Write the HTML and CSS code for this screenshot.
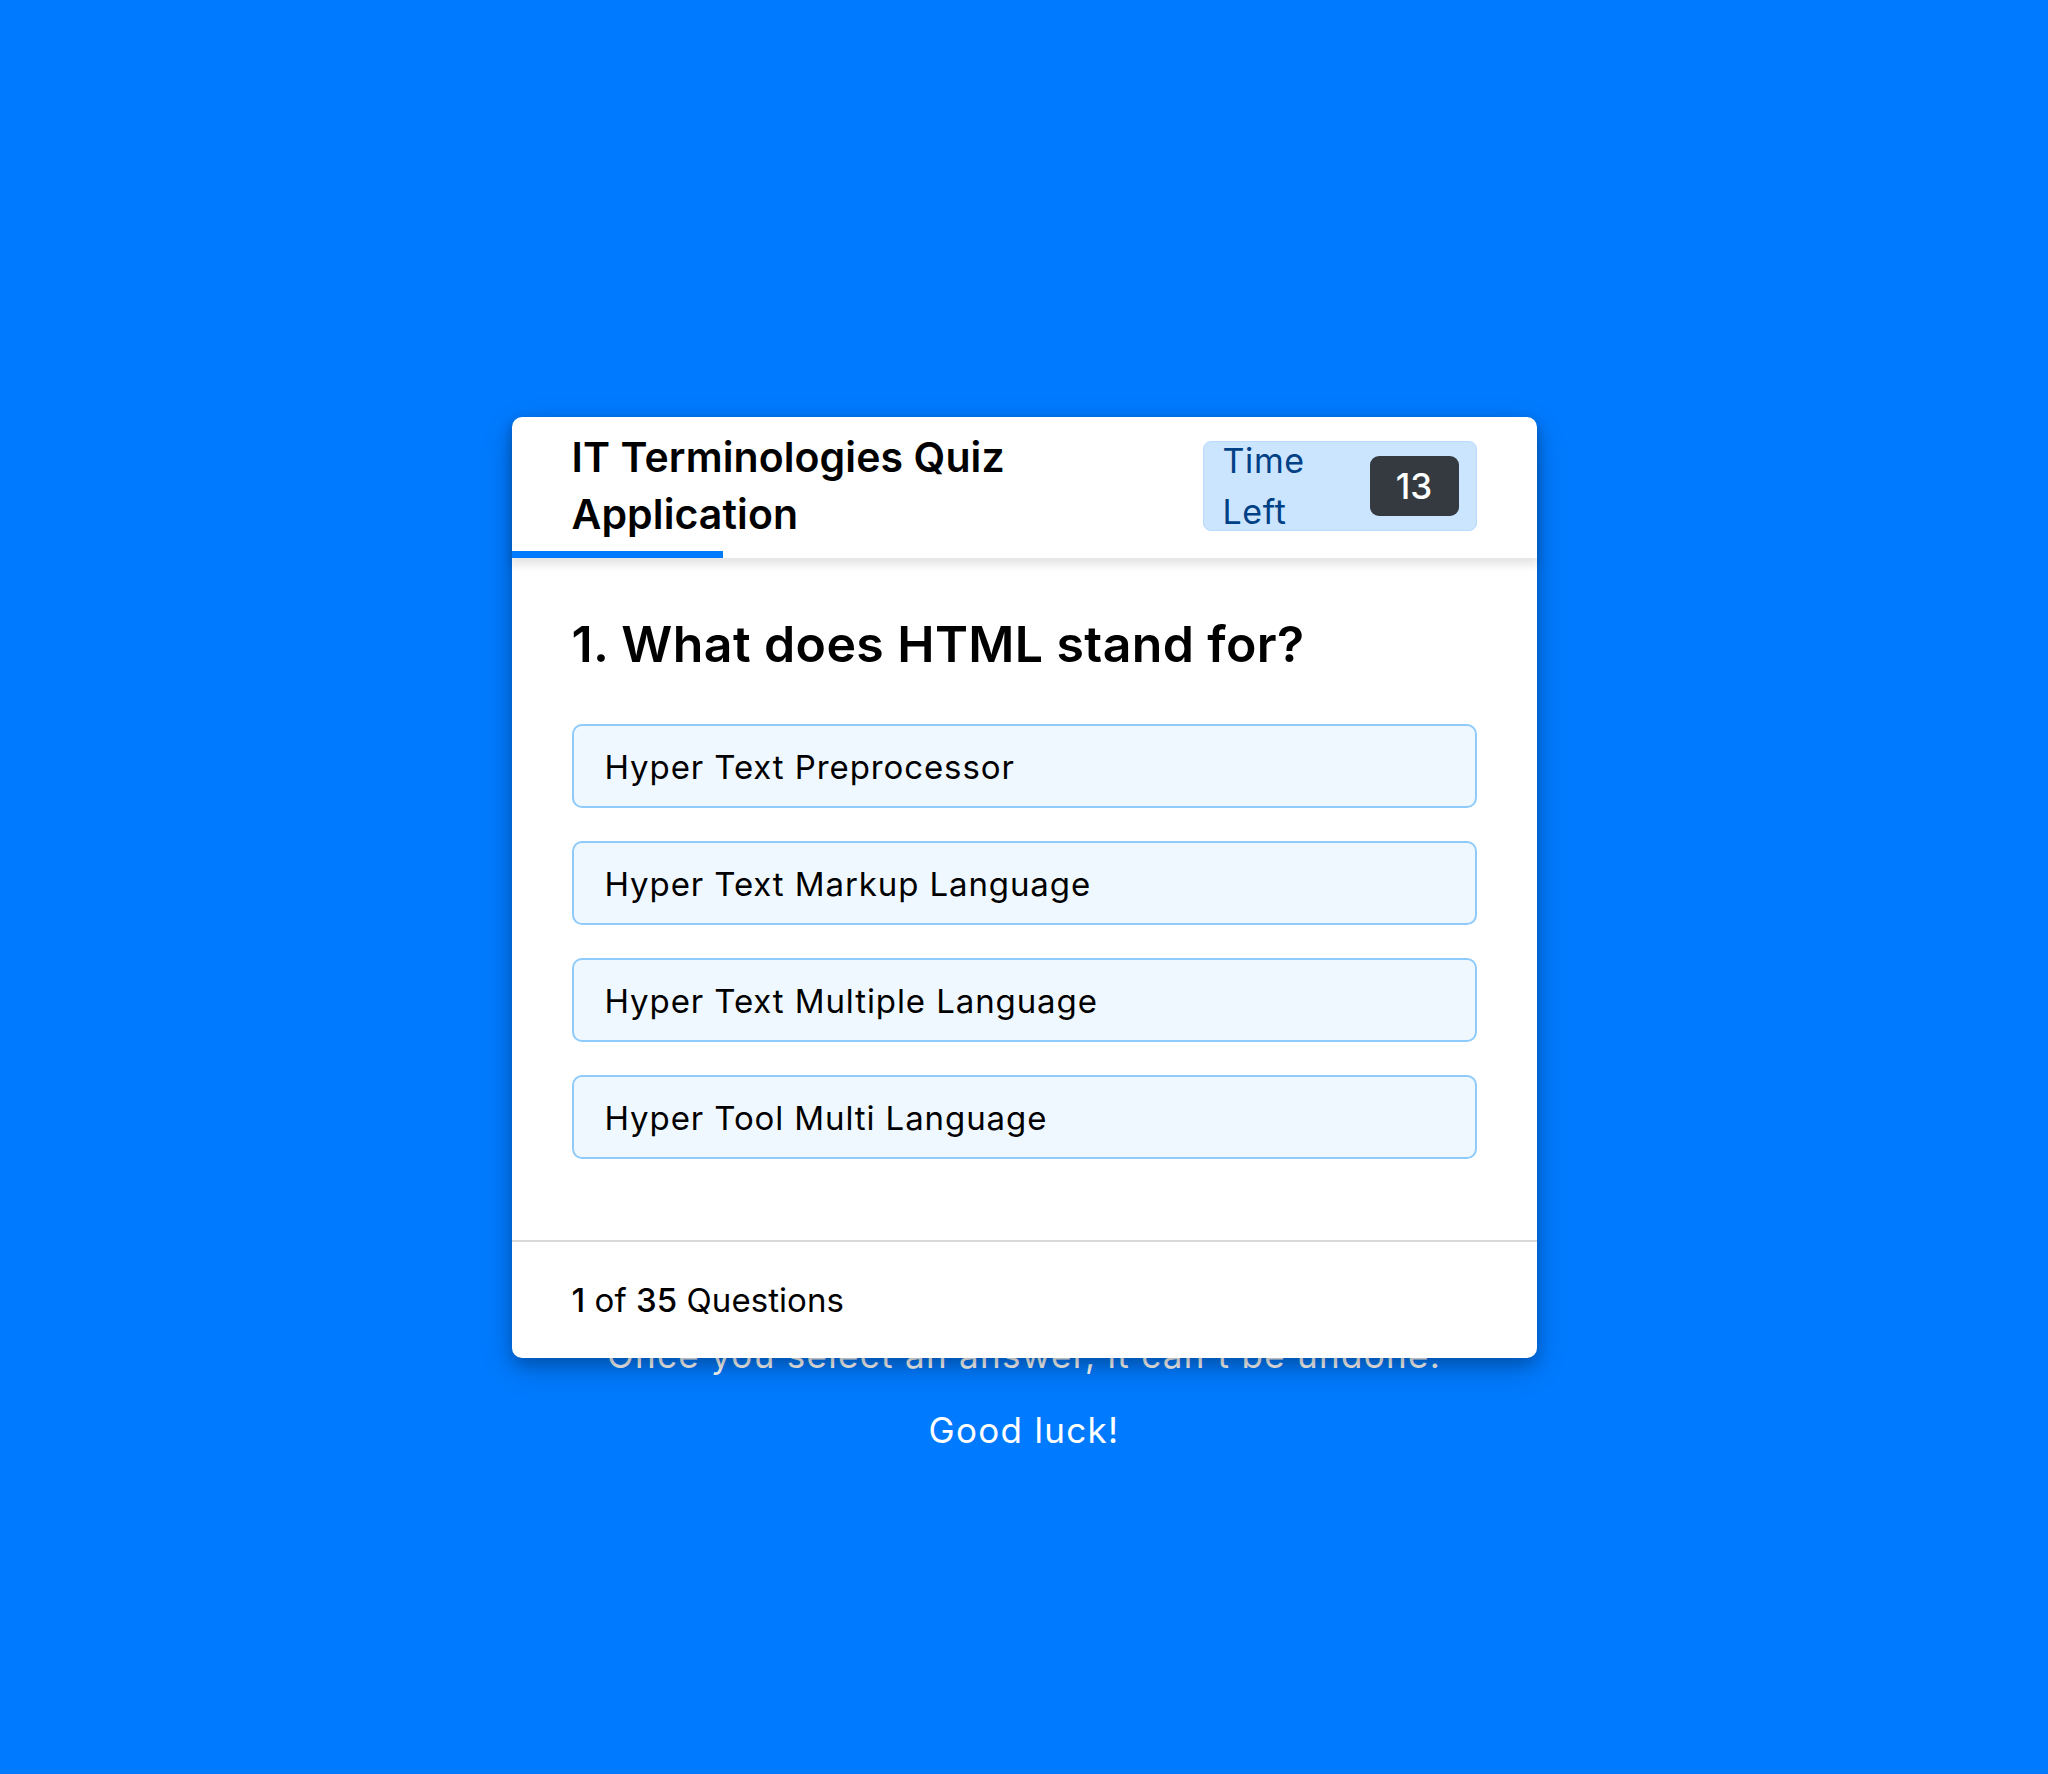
FILE: index.html
```html
<!DOCTYPE html>
<html lang="en">
<head>
<meta charset="utf-8">
<title>IT Terminologies Quiz Application</title>
<link rel="stylesheet" href="styles.css">
</head>
<body>
<main class="stage">
  <div class="info">
    <p class="info-line">Once you select an answer, it can't be undone.</p>
    <p class="info-line">Good luck!</p>
  </div>
  <section class="quiz">
    <header class="quiz-head">
      <div class="title">IT Terminologies Quiz Application</div>
      <div class="timer">
        <span class="timer-label">Time Left</span>
        <span class="timer-sec">13</span>
      </div>
      <div class="time-line"></div>
    </header>
    <div class="quiz-body">
      <h2 class="question">1. What does HTML stand for?</h2>
      <div class="options">
        <div class="option">Hyper Text Preprocessor</div>
        <div class="option">Hyper Text Markup Language</div>
        <div class="option">Hyper Text Multiple Language</div>
        <div class="option">Hyper Tool Multi Language</div>
      </div>
    </div>
    <footer class="quiz-foot">
      <p class="count"><b>1</b> of <b>35</b> Questions</p>
    </footer>
  </section>
</main>
</body>
</html>
```

FILE: styles.css
```css
* { box-sizing: border-box; }

body {
  margin: 0;
  background: #007bff;
  font-family: Inter, "Open Sans", "DejaVu Sans", sans-serif;
  color: #000;
}

.stage {
  min-height: 100vh;
  display: grid;
}

.stage > * { grid-area: 1 / 1; }

.info {
  align-self: end;
  justify-self: center;
  margin-bottom: 306px;
  text-align: center;
  color: #fff;
  font-size: 35px;
  line-height: 75px;
  letter-spacing: 1.3px;
}

.info-line { margin: 0; }

.quiz {
  place-self: center;
  z-index: 1;
  width: 1025px;
  background: #fff;
  border-radius: 10px;
  box-shadow: 0 7px 15px rgba(0, 0, 0, 0.2), 0 11px 37px rgba(0, 0, 0, 0.19);
}

.quiz-head {
  position: relative;
  display: flex;
  align-items: center;
  justify-content: space-between;
  padding: 12px 60px 15px;
  border-radius: 10px 10px 0 0;
  box-shadow: 0 5px 9px 2px rgba(0, 0, 0, 0.1);
}

.title {
  width: 480px;
  font-size: 41px;
  font-weight: 600;
  line-height: 57px;
  letter-spacing: 0.1px;
}

.timer {
  width: 274px;
  height: 90px;
  display: flex;
  align-items: center;
  justify-content: space-between;
  padding: 0 17px 0 19px;
  background: #cce5ff;
  border: 1px solid #b8daff;
  border-radius: 8px;
  color: #004085;
}

.timer-label {
  width: 110px;
  font-size: 34px;
  line-height: 51px;
  letter-spacing: 0.6px;
}

.timer-sec {
  width: 89px;
  height: 60px;
  line-height: 60px;
  text-align: center;
  background: #343a40;
  border-radius: 9px;
  color: #fff;
  font-size: 35px;
  font-weight: 500;
}

.time-line {
  position: absolute;
  left: 0;
  bottom: 0;
  width: 211px;
  height: 7px;
  background: #007bff;
}

.quiz-body {
  padding: 56px 60px 81px;
}

.question {
  margin: 0 0 50px;
  font-size: 50px;
  line-height: 60px;
  font-weight: 600;
  letter-spacing: 0.4px;
}

.options {
  display: flex;
  flex-direction: column;
  gap: 33px;
}

.option {
  height: 84px;
  padding: 2px 30px 0 31px;
  line-height: 78px;
  background: #f0f8ff;
  border: 2px solid #8ecbfb;
  border-radius: 10px;
  font-size: 33px;
  letter-spacing: 0.9px;
}

.quiz-foot {
  height: 118px;
  display: flex;
  align-items: center;
  padding: 0 60px;
  border-top: 2px solid #d9d9d9;
}

.count {
  margin: 0;
  font-size: 33px;
  letter-spacing: 0.05px;
}

.count b { font-weight: 500; }
```
